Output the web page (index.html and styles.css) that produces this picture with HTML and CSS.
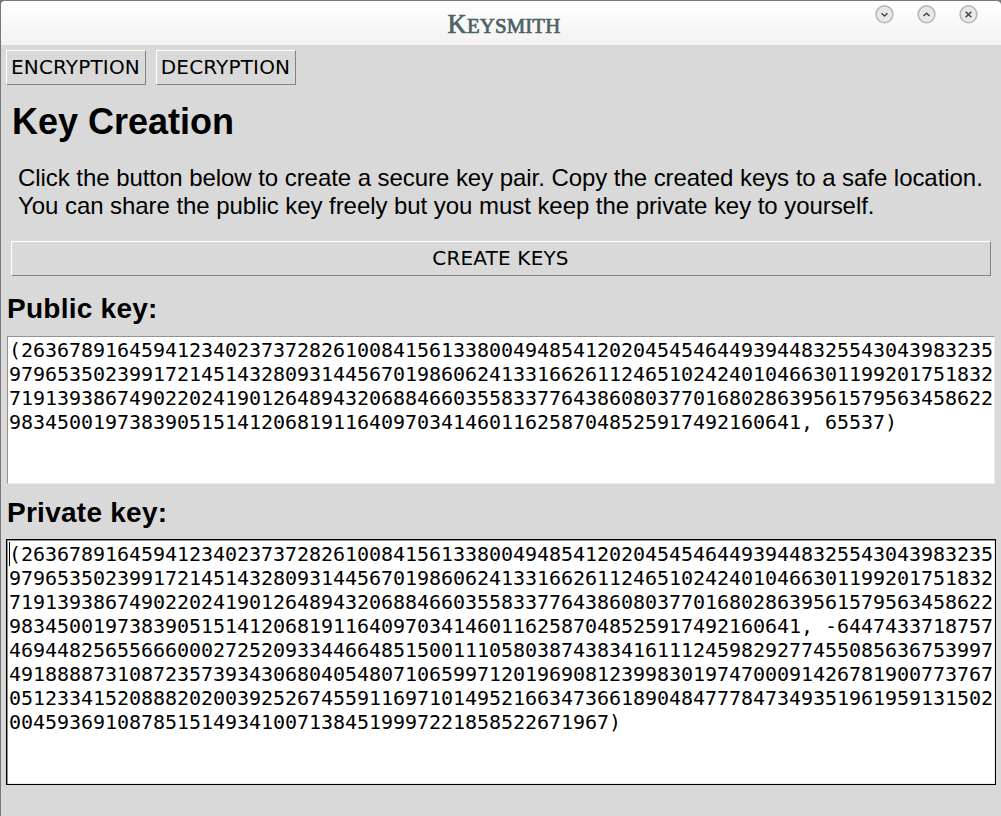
FILE: index.html
```html
<!DOCTYPE html>
<html lang="en">
<head>
<meta charset="utf-8">
<title>Keysmith</title>
<link rel="stylesheet" href="styles.css">
</head>
<body>
<div class="window">
  <header class="titlebar">
    <span class="spacer"></span>
    <h1 class="app-title">K<span class="small">EYSMITH</span></h1>
    <div class="controls">
      <svg class="control" viewBox="0 0 19 19"><circle class="disc" cx="9.5" cy="9.3" r="8.4"/><path class="glyph" d="M6.5 8.3l3 2.7 3-2.7"/></svg>
      <svg class="control" viewBox="0 0 19 19"><circle class="disc" cx="9.5" cy="9.3" r="8.4"/><path class="glyph" d="M6.5 11l3-2.7 3 2.7"/></svg>
      <svg class="control" viewBox="0 0 19 19"><circle class="disc" cx="9.5" cy="9.3" r="8.4"/><path class="glyph" d="M6.7 6.7l5.6 5.6M12.3 6.7l-5.6 5.6"/></svg>
    </div>
  </header>
  <main class="content">
    <nav class="tabs">
      <button class="button tab">ENCRYPTION</button>
      <button class="button tab">DECRYPTION</button>
    </nav>
    <h2 class="heading">Key Creation</h2>
    <p class="intro">Click the button below to create a secure key pair. Copy the created keys to a safe location.<br>You can share the public key freely but you must keep the private key to yourself.</p>
    <button class="button create">CREATE KEYS</button>
    <h3 class="label">Public key:</h3>
    <div class="field public">(263678916459412340237372826100841561338004948541202045454644939448325543043983235
9796535023991721451432809314456701986062413316626112465102424010466301199201751832
7191393867490220241901264894320688466035583377643860803770168028639561579563458622
983450019738390515141206819116409703414601162587048525917492160641, 65537)</div>
    <h3 class="label">Private key:</h3>
    <div class="field private"><i class="caret"></i>(263678916459412340237372826100841561338004948541202045454644939448325543043983235
9796535023991721451432809314456701986062413316626112465102424010466301199201751832
7191393867490220241901264894320688466035583377643860803770168028639561579563458622
983450019738390515141206819116409703414601162587048525917492160641, -6447433718757
4694482565566600027252093344664851500111058038743834161112459829277455085636753997
4918888731087235739343068040548071065997120196908123998301974700091426781900773767
0512334152088820200392526745591169710149521663473661890484777847349351961959131502
00459369108785151493410071384519997221858522671967)</div>
  </main>
</div>
</body>
</html>
```
FILE: styles.css
```css
* { box-sizing: border-box; }
html { background: #777; }
body { margin: 0; color: #000; font-family: "Liberation Sans", Arial, sans-serif; }
.window {
  height: 816px;
  border-top: 1px solid #777;
  border-left: 1px solid #777;
  border-radius: 5px 5px 0 0;
  background: #d9d9d9;
  overflow: hidden;
}
.titlebar {
  display: grid;
  grid-template-columns: 1fr auto 1fr;
  height: 44px;
  padding: 0 23px 0 29px;
  background: linear-gradient(#fff, #f3f2f1);
}
.app-title {
  margin: 8px 0 0;
  font: 26.5px/30px "Liberation Serif", "Times New Roman", serif;
  letter-spacing: 0.15px;
  color: #4b6267;
  -webkit-text-stroke: 0.7px #4b6267;
}
.small { font-size: 20.8px; }
.controls { display: flex; justify-content: flex-end; gap: 23px; padding-top: 4px; }
.control { width: 19px; height: 19px; }
.disc { fill: #e9e9e9; stroke: #b9b9b9; stroke-width: 1.6; }
.glyph { fill: none; stroke: #444; stroke-width: 1.5; }
.content { display: flex; flex-direction: column; padding: 5px 5px 0; }
.tabs { display: flex; gap: 10px; }
.button {
  height: 35px;
  padding: 0;
  border: 1px solid;
  border-color: #fff #828282 #828282 #fff;
  background: #d9d9d9;
  color: #000;
  font: 20px/31px "DejaVu Sans", sans-serif;
  letter-spacing: 0.17px;
  white-space: nowrap;
}
.tab { width: 140px; padding-right: 1px; }
.heading { margin: 16px 0 0 6px; font-size: 36px; line-height: 42px; }
.intro { margin: 21px 0 0 12px; font-size: 24px; line-height: 28px; letter-spacing: -0.055px; white-space: nowrap; }
.create { margin: 21px 5px 0; padding-right: 1px; }
.label { margin: 17px 0 0 1px; font-size: 28px; line-height: 32px; letter-spacing: 0.26px; }
.field {
  background: #fff;
  font: 20px/24px "DejaVu Sans Mono", monospace;
  letter-spacing: -0.041px;
  white-space: pre;
}
.public {
  height: 148px;
  margin: 11px 1px 0;
  padding: 1px 0 0 1px;
  border: 1px solid;
  border-color: #929292 #ececec #ececec #929292;
}
.public + .label { margin-top: 13px; }
.private {
  position: relative;
  height: 246px;
  margin-top: 10px;
  padding: 2px 0 0 2px;
  border: 1px solid #000;
  box-shadow: inset 1px 1px #929292, inset -1px -1px #ececec;
}
.caret { position: absolute; left: 2px; top: 2px; width: 1px; height: 24px; background: #000; }
```
